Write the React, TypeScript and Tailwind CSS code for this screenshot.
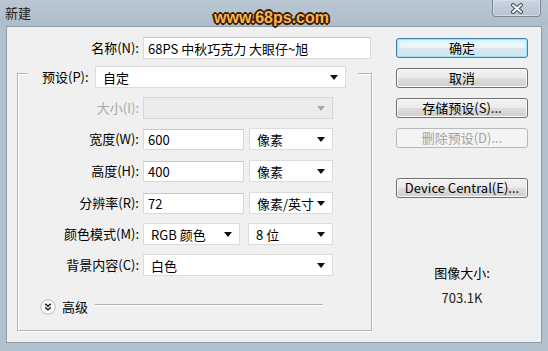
import React from "react";

function Arrow({ disabled }: { disabled?: boolean }) {
  return (
    <svg width="8" height="5" viewBox="0 0 8 5" className="shrink-0">
      <polygon points="0,0 8,0 4,5" fill={disabled ? "#a8a8a8" : "#111"} />
    </svg>
  );
}

function Combo({ w, text, disabled }: { w: string; text: string; disabled?: boolean }) {
  return (
    <div
      className={`${w} h-[22px] flex items-center justify-between pl-[7px] pr-[7px] border ${
        disabled ? "bg-[#ececec] border-[#d6d6d6]" : "bg-white border-[#dcdcdc]"
      }`}
    >
      <span className="leading-none">{text}</span>
      <Arrow disabled={disabled} />
    </div>
  );
}

function Input({ w, text }: { w: string; text: string }) {
  return (
    <div className={`${w} h-[21px] flex items-center pl-[4px] bg-white border border-[#d8d8d8] border-t-[#c8c8c8]`}>
      <span className="leading-none">{text}</span>
    </div>
  );
}

function Btn({ text, kind }: { text: string; kind?: "default" | "disabled" }) {
  if (kind === "default")
    return (
      <div className="w-[132px] h-[20px] rounded-[3px] border border-[#3c7fb1] shadow-[inset_0_0_0_1px_#9de3f9,inset_0_0_3px_2px_#c6eefb] bg-[linear-gradient(to_bottom,#f4f9fb_0%,#eaf3f6_50%,#dbe8ee_51%,#cfe2ea_100%)] flex items-center justify-center text-[13px] text-black">
        {text}
      </div>
    );
  if (kind === "disabled")
    return (
      <div className="w-[132px] h-[20px] rounded-[3px] border border-[#b5b9bc] bg-[#f4f4f4] flex items-center justify-center text-[13px] text-[#a3a3a3]">
        {text}
      </div>
    );
  return (
    <div className="w-[132px] h-[20px] rounded-[3px] border border-[#707070] shadow-[inset_0_0_0_1px_#fbfbfb] bg-[linear-gradient(to_bottom,#f2f2f2_0%,#ebebeb_50%,#dddddd_51%,#cfcfcf_100%)] flex items-center justify-center text-[13px] text-black">
      {text}
    </div>
  );
}

function Row({ label, children, mt, disabled }: { label: string; children: React.ReactNode; mt: string; disabled?: boolean }) {
  return (
    <div className={`flex items-center ${mt}`}>
      <div className={`w-[121px] text-right ${disabled ? "text-[#a8a8a8]" : "text-black"}`}>{label}</div>
      <div className="ml-[4px] flex items-center">{children}</div>
    </div>
  );
}

export default function App() {
  return (
    <div className="w-[548px] h-[351px] flex flex-col bg-[#b2c1ce] font-['Noto_Sans_CJK_SC',sans-serif] text-[13px] text-black overflow-hidden">
      {/* title bar */}
      <div className="relative h-[26px] shrink-0 bg-[linear-gradient(to_bottom,#b9c7d3,#aebdca)]">
        <div className="absolute left-[5px] top-[3px] text-[13px] text-[#1b1b1b]">新建</div>
        <div className="absolute left-[214px] top-[8px] font-['Liberation_Sans',sans-serif] font-bold text-[16px] leading-[20px] text-[#f7b54e] [text-shadow:1px_0_0_#3b1d08,-1px_0_0_#3b1d08,0_1px_0_#3b1d08,0_-1px_0_#3b1d08,1px_1px_0_#3b1d08,-1px_-1px_0_#3b1d08,1px_-1px_0_#3b1d08,-1px_1px_0_#3b1d08,2px_0_0_#3b1d08,-2px_0_0_#3b1d08,0_2px_0_#3b1d08,0_-2px_0_#3b1d08]">
          www.68ps.com
        </div>
        <div className="absolute left-[492px] top-0 w-[49px] h-[17px] rounded-b-[4px] border border-t-0 border-[#7c8995] shadow-[inset_0_0_0_1px_#d3dde6] bg-[linear-gradient(to_bottom,#c9d5df,#b6c4d0)] flex items-center justify-center">
          <svg width="14" height="11" viewBox="0 0 14 11">
            <path d="M3 2 L11 9 M11 2 L3 9" stroke="#3f4a55" strokeWidth="4" strokeLinecap="round" />
            <path d="M3 2 L11 9 M11 2 L3 9" stroke="#ffffff" strokeWidth="2" strokeLinecap="round" />
          </svg>
        </div>
      </div>

      {/* client area */}
      <div className="flex-1 mx-[6px] mb-[8px] bg-[#f0f0f0] border border-[#8e9ba8] flex">
        {/* left column */}
        <div className="w-[365px] pt-[10px]">
          <div className="flex items-center">
            <div className="w-[132px] text-right">名称(N):</div>
            <div className="ml-[4px]">
              <div className="w-[228px] h-[22px] flex items-center pl-[4px] bg-white border border-[#d8d8d8] border-t-[#c8c8c8]">
                <span className="leading-none">68PS 中秋巧克力 大眼仔~旭</span>
              </div>
            </div>
          </div>

          {/* group box */}
          <div className="mt-[14px] ml-[10px] w-[355px] h-[258px] border border-[#b4b4b4] shadow-[inset_1px_1px_0_#ffffff,1px_1px_0_#ffffff]">
            <div className="-mt-[8px] ml-[10px] w-[330px] bg-[#f0f0f0] flex items-center pl-[14px]">
              <div className="w-[50px]">预设(P):</div>
              <div className="ml-[3px]">
                <Combo w="w-[251px]" text="自定" />
              </div>
            </div>
            <Row label="大小(I):" mt="mt-[9px]" disabled>
              <Combo w="w-[190px]" text="" disabled />
            </Row>
            <Row label="宽度(W):" mt="mt-[9px]">
              <Input w="w-[101px]" text="600" />
              <div className="ml-[5px]">
                <Combo w="w-[84px]" text="像素" />
              </div>
            </Row>
            <Row label="高度(H):" mt="mt-[10px]">
              <Input w="w-[101px]" text="400" />
              <div className="ml-[5px]">
                <Combo w="w-[84px]" text="像素" />
              </div>
            </Row>
            <Row label="分辨率(R):" mt="mt-[10px]">
              <Input w="w-[101px]" text="72" />
              <div className="ml-[5px]">
                <Combo w="w-[84px]" text="像素/英寸" />
              </div>
            </Row>
            <Row label="颜色模式(M):" mt="mt-[9px]">
              <Combo w="w-[97px]" text="RGB 颜色" />
              <div className="ml-[8px]">
                <Combo w="w-[85px]" text="8 位" />
              </div>
            </Row>
            <Row label="背景内容(C):" mt="mt-[9px]">
              <Combo w="w-[190px]" text="白色" />
            </Row>
            <div className="mt-[21px] ml-[22px] flex items-center">
              <svg width="16" height="16" viewBox="0 0 16 16" className="shrink-0">
                <circle cx="8" cy="8" r="7.2" fill="#fbfbfb" stroke="#b9b9b9" />
                <path d="M5.2 4.8 L8 7.2 L10.8 4.8 M5.2 8.4 L8 10.8 L10.8 8.4" stroke="#2a2a2a" strokeWidth="1.6" fill="none" />
              </svg>
              <div className="ml-[6px]">高级</div>
              <div className="ml-[7px] -mt-[4px] w-[228px] h-[1px] bg-[#b0b0b0] shadow-[0_1px_0_#ffffff]" />
            </div>
          </div>
        </div>

        {/* right column */}
        <div className="ml-[24px] pt-[11px] flex flex-col items-center w-[132px]">
          <Btn text="确定" kind="default" />
          <div className="mt-[10px]"><Btn text="取消" /></div>
          <div className="mt-[10px]"><Btn text="存储预设(S)..." /></div>
          <div className="mt-[10px]"><Btn text="删除预设(D)..." kind="disabled" /></div>
          <div className="mt-[30px]"><Btn text="Device Central(E)..." /></div>
          <div className="mt-[67px] leading-[16px]">图像大小:</div>
          <div className="mt-[9px] leading-[16px] text-[#222]">703.1K</div>
        </div>
      </div>
    </div>
  );
}
